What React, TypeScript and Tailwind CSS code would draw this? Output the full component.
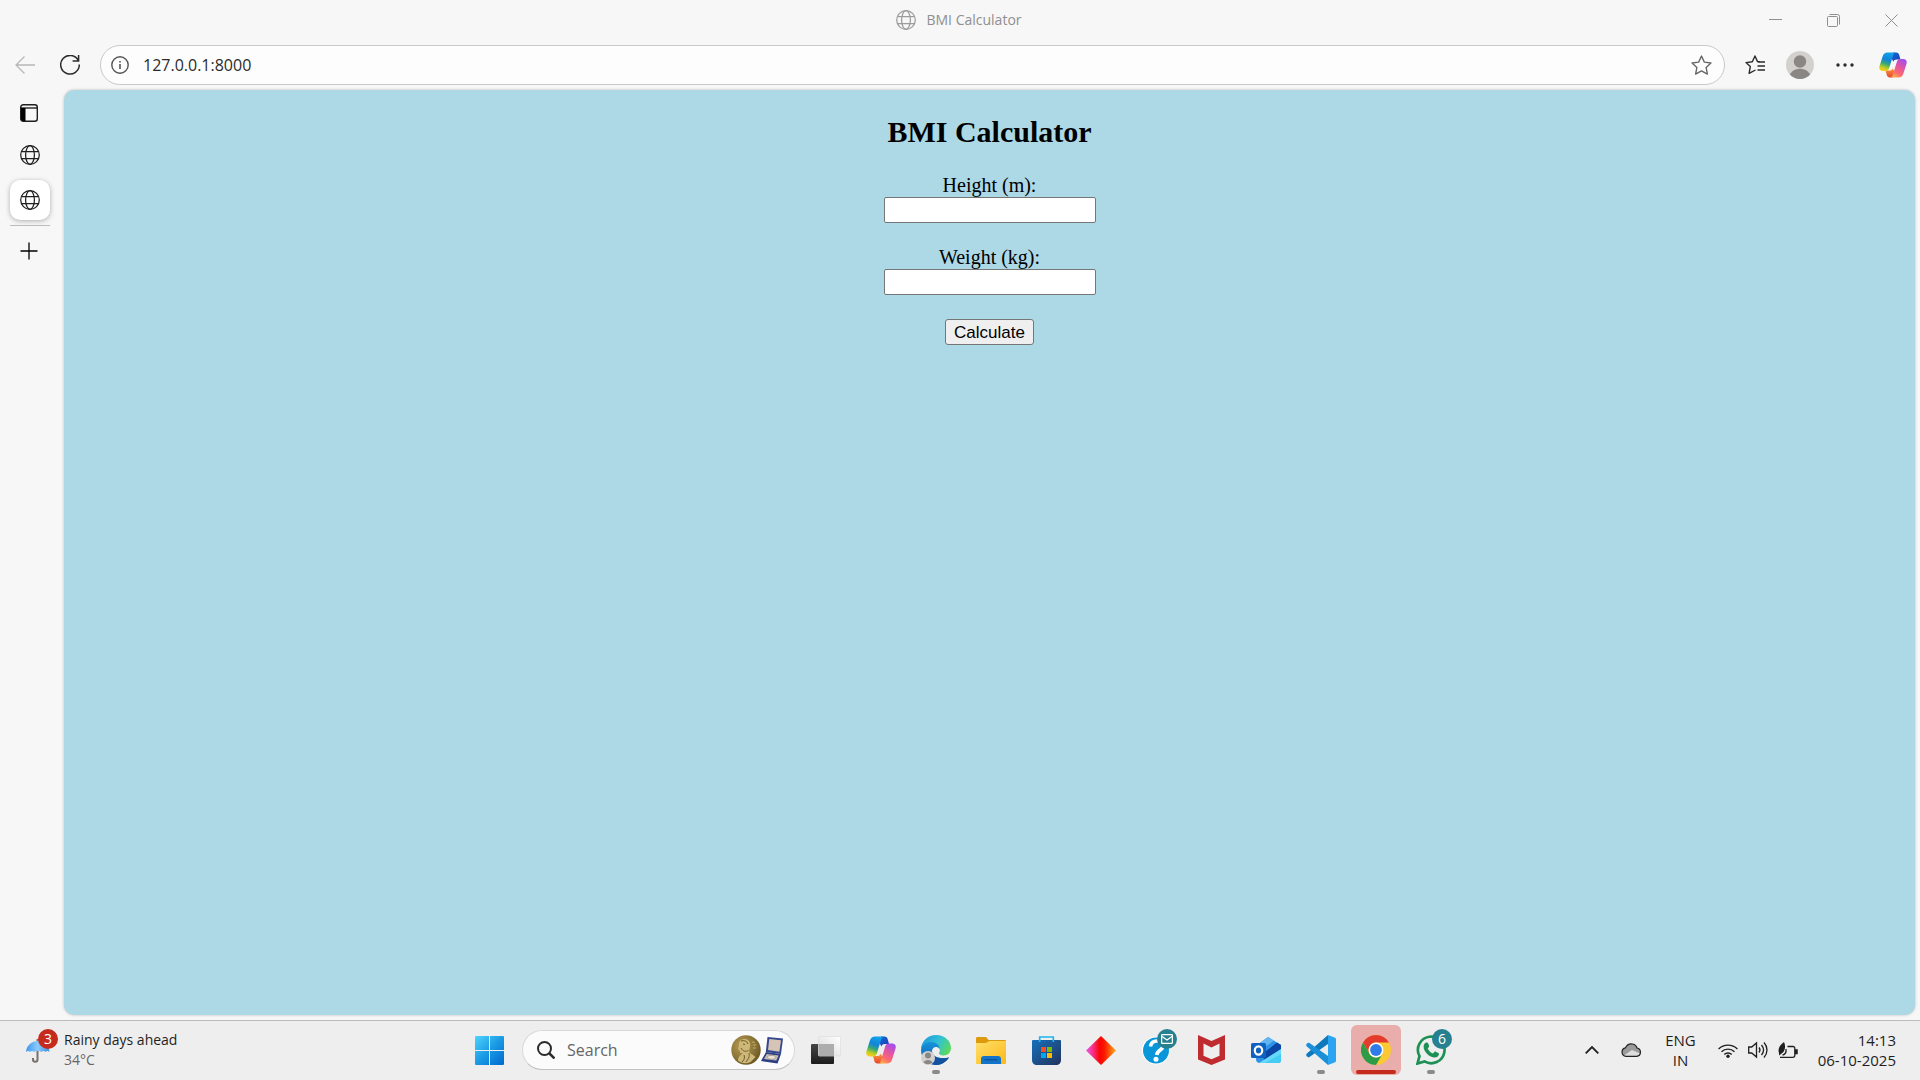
import type { ReactNode } from "react";

const ui = "font-['Open_Sans','Noto_Sans',sans-serif]";

function Globe({ className }: { className: string }) {
  return (
    <svg viewBox="0 0 20 20" className={className} fill="none" stroke="currentColor" strokeWidth="1.25">
      <circle cx="10" cy="10" r="9.3" />
      <ellipse cx="10" cy="10" rx="4.4" ry="9.3" />
      <path d="M1.4 6.7h17.2M1.4 13.5h17.2" />
    </svg>
  );
}

function Copilot({ id, className }: { id: string; className: string }) {
  const blue = `${id}-blue`;
  const pink = `${id}-pink`;
  const dark = `${id}-dark`;
  const flame = `${id}-flame`;
  return (
    <svg viewBox="0 0 30 28" className={className}>
      <defs>
        <linearGradient id={blue} x1="0.6" y1="0" x2="0.3" y2="1">
          <stop offset="0" stopColor="#0fa3ea" />
          <stop offset="0.4" stopColor="#1583d8" />
          <stop offset="0.62" stopColor="#35a977" />
          <stop offset="0.85" stopColor="#c5cf1e" />
          <stop offset="1" stopColor="#fccb1c" />
        </linearGradient>
        <linearGradient id={pink} x1="0.8" y1="0" x2="0.3" y2="1">
          <stop offset="0" stopColor="#a04df4" />
          <stop offset="0.45" stopColor="#e6559f" />
          <stop offset="0.75" stopColor="#fb6a70" />
          <stop offset="1" stopColor="#fda94b" />
        </linearGradient>
        <linearGradient id={dark} x1="0" y1="0" x2="1" y2="1">
          <stop offset="0" stopColor="#1169d6" />
          <stop offset="1" stopColor="#1c3fb8" />
        </linearGradient>
        <linearGradient id={flame} x1="0" y1="0" x2="0" y2="1">
          <stop offset="0" stopColor="#fd9a3c" />
          <stop offset="1" stopColor="#e5452f" />
        </linearGradient>
      </defs>
      <path d="M15 .5h3.500c1.800 0 2.700 1 3.200 2.700L23 8h-4c-2 0-3 .8-3.600 2.600L13 6z" fill={`url(#${dark})`} />
      <path d="M15 27.500h-3.500c-1.800 0-2.700-1-3.200-2.700L7 20h4c2 0 3-.8 3.600-2.600L17 22z" fill={`url(#${flame})`} />
      <path d="M9 .5h9c-1.700 0-2.400 1.500-3 3.500l-4 13c-.6 2-1.500 3.500-4 3.500H4c-3.200 0-4.400-2.400-3.500-5.300L4 4.300C4.800 1.800 6.500.5 9 .5z" fill={`url(#${blue})`} />
      <path d="M21 27.500h-9c1.700 0 2.400-1.500 3-3.500l4-13c.6-2 1.500-3.500 4-3.500h3c3.200 0 4.400 2.400 3.500 5.300L26 23.700c-.8 2.500-2.500 3.800-5 3.800z" fill={`url(#${pink})`} />
    </svg>
  );
}

function WindowsLogo() {
  return (
    <svg viewBox="0 0 29 29" className="size-[29px]">
      <defs>
        <linearGradient id="win" x1="0" y1="0" x2="29" y2="29" gradientUnits="userSpaceOnUse">
          <stop offset="0" stopColor="#4fd5fd" />
          <stop offset="0.5" stopColor="#1a9ae4" />
          <stop offset="1" stopColor="#0068cf" />
        </linearGradient>
      </defs>
      <path fill="url(#win)" d="M1 0h13v14H0V1a1 1 0 0 1 1-1zM15 0h13a1 1 0 0 1 1 1v13H15zM0 15h14v14H1a1 1 0 0 1-1-1zM15 15h14v13a1 1 0 0 1-1 1H15z" />
    </svg>
  );
}

function Medal() {
  return (
    <svg viewBox="0 0 30 30" className="size-[30px]">
      <defs>
        <radialGradient id="gold" cx="0.35" cy="0.35" r="0.75">
          <stop offset="0" stopColor="#b59a50" />
          <stop offset="0.6" stopColor="#8b7438" />
          <stop offset="1" stopColor="#64521f" />
        </radialGradient>
      </defs>
      <circle cx="15" cy="15" r="14.700" fill="url(#gold)" />
      <path d="M10 5c4-2.500 9 0 9.200 4.500.2 3-1.200 4.500-1 7 .4 2.500 4.300 3 6.300 5.500l-5 5c-4 2-9 1.500-12.500-1.500 0-4 3-5.500 4.800-7.500-2.300.3-3.300-.5-3-2.500L7 14l1-3c-.4-2 .2-4.500 2-6z" fill="#cdb87a" />
      <path d="M10 13c2 3.500 4.500 4 7.500 2.500M13 20c1 3 .5 4.500-2 7M18 18c1 4-1 6-3 9M10 6c3-1 6 0 7 3M12 9l2 .5" stroke="#715c29" strokeWidth="1" fill="none" />
      <path d="M21 7l3 .5M22 10h3.500M22 13h3" stroke="#cdb87a" strokeWidth=".8" />
    </svg>
  );
}

function MedalBox() {
  return (
    <svg viewBox="0 0 22 27" className="h-[27px] w-[22px]">
      <path d="M6.500 0L22 1.500 20 17 4.800 15z" fill="#34488c" />
      <path d="M8.300 2L20 3.200 18.400 14.700 7 13z" fill="#d6c5b6" />
      <path d="M5 15l15 2-3.500 9.500L0 24z" fill="#2b3f86" />
      <path d="M5.800 17l11.800 1.600-2.300 5L3 22z" fill="#cbbcb0" />
      <ellipse cx="10.500" cy="20.300" rx="4.200" ry="1.900" fill="#ece5dc" stroke="#8a7f76" strokeWidth=".6" />
    </svg>
  );
}

function TaskView() {
  return (
    <svg viewBox="0 0 30 28" className="h-7 w-[30px]">
      <defs>
        <linearGradient id="tvd" x1="0" y1="0" x2="0" y2="1">
          <stop offset="0" stopColor="#454545" /><stop offset="1" stopColor="#1c1c1c" />
        </linearGradient>
        <linearGradient id="tvl" x1="1" y1="0" x2="0" y2="1">
          <stop offset="0" stopColor="#fff" /><stop offset="1" stopColor="#d8d8d8" />
        </linearGradient>
      </defs>
      <rect x="0" y="8" width="23" height="20" rx="1" fill="url(#tvd)" />
      <rect x="7.500" y=".5" width="22" height="19.500" rx="1" fill="url(#tvl)" stroke="#dedede" strokeWidth=".7" />
      <rect x="8" y="8" width="15" height="12" fill="#adadad" />
    </svg>
  );
}

function Edge() {
  return (
    <svg viewBox="0 0 30 30" className="size-[30px]">
      <defs>
        <linearGradient id="edge-top" x1="0" y1="0.3" x2="1" y2="0.7">
          <stop offset="0" stopColor="#1e9ad8" /><stop offset="0.5" stopColor="#31c1d6" /><stop offset="1" stopColor="#5fdb55" />
        </linearGradient>
        <linearGradient id="edge-mid" x1="0" y1="0" x2="0" y2="1">
          <stop offset="0" stopColor="#1894dd" /><stop offset="1" stopColor="#0b57a8" />
        </linearGradient>
      </defs>
      <path d="M0 14C.5 6 7 0 15 0c9 0 15 6 15 13 0 4.500-3.200 7.500-7.500 7.500-3.500 0-5-1.500-4.500-2.700 1-1.500 1-3 .3-4.300C15 8 5 8 0 14z" fill="url(#edge-top)" />
      <path d="M0 15c1-6 6-8.500 11-8 4.500.4 7.600 3.500 7.500 7-1-1.500-2.200-2-3.500-2-2.300 0-4 1.800-4 4.200 0 5.300 7 8 17 6.300C24.500 27.500 19.500 30 15 30 7 30 0 24 0 15z" fill="url(#edge-mid)" />
      <path d="M11 17c1 5.500 8 8 17 5.500C24.500 28 19 30.500 13.500 29.900 10 27 9.500 21 11 17z" fill="#1252a0" />
      <circle cx="7" cy="23" r="7" fill="#d3d1ce" />
      <circle cx="7" cy="20.500" r="3" fill="#8a8683" />
      <path d="M2.500 27.500c1-3.500 8-3.500 9 0a6.500 6.500 0 0 1-9 0z" fill="#8a8683" />
    </svg>
  );
}

function Explorer() {
  return (
    <svg viewBox="0 0 30 27" className="h-[27px] w-[30px]">
      <defs>
        <linearGradient id="folder" x1="0" y1="0" x2="1" y2="1">
          <stop offset="0" stopColor="#ffdf6c" /><stop offset="1" stopColor="#fbb917" />
        </linearGradient>
      </defs>
      <path d="M0 1.500C0 .6.600 0 1.500 0H9c1 0 1.500.4 2 1l1.500 2H29a1 1 0 0 1 1 1v8H0z" fill="#dc9a0c" />
      <path d="M0 6h9c1.500 0 2-.5 3-1.200L13.500 4H30v22a1 1 0 0 1-1 1H1a1 1 0 0 1-1-1z" fill="url(#folder)" />
      <path d="M5 27v-5c0-2 1-3 3-3h14c2 0 3 1 3 3v5z" fill="#1274c8" />
      <path d="M8.500 22.800h13" stroke="#0b4f94" strokeWidth="1.200" />
    </svg>
  );
}

function Store() {
  return (
    <svg viewBox="0 0 29 29" className="size-[29px]">
      <defs>
        <linearGradient id="bag" x1="0" y1="0" x2="1" y2="1">
          <stop offset="0" stopColor="#1570bc" /><stop offset="1" stopColor="#23335c" />
        </linearGradient>
      </defs>
      <path d="M0 5a1 1 0 0 1 1-1h27a1 1 0 0 1 1 1v19c0 3-2 5-5 5H5c-3 0-5-2-5-5z" fill="url(#bag)" />
      <path d="M7.700 6V1h13.600v5" fill="none" stroke="#1fb5ee" strokeWidth="1.700" />
      <path d="M9 11h5v5H9z" fill="#f25022" />
      <path d="M15 11h5v5h-5z" fill="#7fba00" />
      <path d="M9 17h5v5H9z" fill="#00a4ef" />
      <path d="M15 17h5v5h-5z" fill="#ffb900" />
    </svg>
  );
}

function Diamond() {
  return (
    <svg viewBox="0 0 30 29" className="h-[29px] w-[30px]">
      <defs>
        <linearGradient id="dia" x1="0" y1="0" x2="1" y2="0">
          <stop offset="0" stopColor="#ee55e6" /><stop offset="0.2" stopColor="#f53596" /><stop offset="0.45" stopColor="#fb0505" /><stop offset="0.6" stopColor="#fb1500" /><stop offset="0.8" stopColor="#f95f0c" /><stop offset="1" stopColor="#f9b01c" />
        </linearGradient>
      </defs>
      <path d="M15 0l15 14.500L15 29 0 14.500z" fill="url(#dia)" />
    </svg>
  );
}

function Help() {
  return (
    <svg viewBox="0 0 30 30" className="size-[30px]">
      <circle cx="15" cy="15.500" r="14" fill="#fff" />
      <circle cx="15" cy="15.500" r="13" fill="#0a97d9" />
      <path d="M9.500 11.500c.5-4 3-5.500 6.500-5.500 6 0 7.500 5.500 4 8.500-2.500 1.800-4 2.700-4.300 5.500" fill="none" stroke="#fff" strokeWidth="3.600" />
      <circle cx="15" cy="24.300" r="2.500" fill="#fff" />
    </svg>
  );
}

function McAfee() {
  return (
    <svg viewBox="0 0 27 30" className="h-[30px] w-[27px]">
      <path d="M0 0l13.500 6L27 0v24.500L13.500 30 0 24.500zM5.500 8.500v12.300l8 3.500 8-3.500V8.500l-8 4z" fill="#bf2c30" fillRule="evenodd" />
    </svg>
  );
}

function Outlook() {
  return (
    <svg viewBox="0 0 30 27" className="h-[27px] w-[30px]">
      <path d="M6 8L17 0l13 8v15a3 3 0 0 1-3 3H9a4 4 0 0 1-4-4z" fill="#2c93e8" />
      <path d="M6 8L17 0l6 3.500L7 15z" fill="#62b5f0" />
      <path d="M30 8v5L14 23l-4-5L26 5.500z" fill="#0b45a6" />
      <path d="M30 12v11a3 3 0 0 1-3 3H8z" fill="#43cdf4" />
      <path d="M30 12v5L14 26H8z" fill="#8be4fa" opacity=".5" />
      <rect x="0" y="6" width="15" height="15" rx="1.500" fill="#0f62c0" />
      <ellipse cx="7.500" cy="13.500" rx="3.700" ry="4.100" fill="none" stroke="#fff" strokeWidth="2.200" />
    </svg>
  );
}

function VsCode() {
  return (
    <svg viewBox="0 0 30 30" className="size-[30px]">
      <path d="M22 0v9L2.800 22.500.3 21v-2z" fill="#0f79bd" />
      <path d="M22 30v-9L2.800 7.500.3 9v2z" fill="#1b8fd8" />
      <path d="M22 0l6.500 2.500c1 .4 1.500 1 1.500 2v21c0 1-.5 1.600-1.500 2L22 30z" fill="#2ba4f2" />
    </svg>
  );
}

function Chrome() {
  return (
    <svg viewBox="0 0 30 30" className="size-[30px]">
      <circle cx="15" cy="15" r="15" fill="#fbc934" />
      <path d="M15 0a15 15 0 0 1 13 7.500H15a7.500 7.500 0 0 0-6.500 11.200L2 7.500A15 15 0 0 1 15 0z" fill="#e33b2e" />
      <path d="M2 7.500l6.500 11.250a7.500 7.500 0 0 0 6.500 3.750 7.500 7.500 0 0 0 6.500-3.750L15 30A15 15 0 0 1 2 7.500z" fill="#2c9c48" />
      <circle cx="15" cy="15" r="7.400" fill="#fff" />
      <circle cx="15" cy="15" r="5.900" fill="#2f7bea" />
    </svg>
  );
}

function WhatsApp() {
  return (
    <svg viewBox="0 0 30 30" className="size-[30px]">
      <path d="M1.500 28.500l2-7.300a13.300 13.300 0 1 1 5 5.200z" fill="none" stroke="#1d9155" strokeWidth="2.700" />
      <path d="M10.300 7.500c.8-.3 1.500 0 1.800.8l1 2.400c.2.600 0 1-.4 1.500l-1 1.200c1 2.300 2.700 4 5.300 5.100l1.300-1.500c.4-.5.800-.6 1.400-.3l2.600 1.200c.7.400.8.800.6 1.600-.5 2-2 3-4.300 3-5 0-11-5.800-11-10.800 0-2.300 1-3.600 2.700-4.200z" fill="#1d9155" />
    </svg>
  );
}

function AppButton({ label, running, active, badge, children }: {
  label: string; running?: boolean; active?: boolean; badge?: ReactNode; children: ReactNode;
}) {
  return (
    <button
      aria-label={label}
      className={`relative flex size-[50px] items-center justify-center rounded-md ${active ? "bg-[#e9aeab]" : ""}`}
    >
      {children}
      {badge && (
        <span className="absolute top-1 right-1 flex size-5 items-center justify-center rounded-full bg-[#26808f] text-sm text-white">
          {badge}
        </span>
      )}
      {running && <span className="absolute bottom-px left-[21px] h-1 w-2 rounded-full bg-[#8a8a8a]" />}
      {active && <span className="absolute bottom-px left-[5px] h-1 w-10 rounded-full bg-[#c42b1c]" />}
    </button>
  );
}

function WindowTitle() {
  return (
    <header className="grid h-10 grid-cols-[1fr_auto_1fr] text-[#8f8f8f]">
      <span />
      <div className="flex items-center gap-2.5 pr-0.5 text-sm">
        <Globe className="size-5 text-[#9c9c9c]" />
        <span>BMI Calculator</span>
      </div>
      <div className="flex items-center justify-end">
        <button aria-label="Minimize" className="flex h-full w-[58px] items-center justify-center">
          <svg viewBox="0 0 13 13" className="size-[13px]" stroke="currentColor"><path d="M0 5.500h13" /></svg>
        </button>
        <button aria-label="Restore" className="flex h-full w-[58px] items-center justify-center">
          <svg viewBox="0 0 13 13" className="size-[13px]" fill="none" stroke="currentColor">
            <rect x=".5" y="2.500" width="10" height="10" rx="1" /><path d="M2.500.5h8a2 2 0 0 1 2 2v8" />
          </svg>
        </button>
        <button aria-label="Close" className="flex h-full w-[58px] items-center justify-center">
          <svg viewBox="0 0 13 13" className="size-[13px]" stroke="currentColor"><path d="M.5.5l12 12M12.500.5l-12 12" /></svg>
        </button>
      </div>
    </header>
  );
}

function Toolbar() {
  return (
    <nav className="flex h-[50px] items-center text-[#2b2b2b]">
      <button aria-label="Back" className="ml-[15px] text-[#b8b8b8]">
        <svg viewBox="0 0 20 18" className="h-[18px] w-5" fill="none" stroke="currentColor" strokeWidth="1.300">
          <path d="M20 9H1M9.500.5L1 9l8.500 8.500" />
        </svg>
      </button>
      <button aria-label="Refresh" className="mr-5 ml-[25px]">
        <svg viewBox="0 0 20 20" className="size-5" fill="none" stroke="currentColor" strokeWidth="1.500">
          <path d="M18.300 5.500A9.300 9.300 0 1 0 19.300 9.500M18.600 0v6h-6" />
        </svg>
      </button>
      <div className="flex h-10 flex-1 items-center rounded-full border border-[#c9c9c9] bg-[#fdfdfd] pr-3 pl-2.5">
        <svg viewBox="0 0 18 18" className="size-[18px] text-[#555]" fill="none" stroke="currentColor" strokeWidth="1.400">
          <circle cx="9" cy="9" r="8.200" /><path d="M9 8v5M9 5v1.500" strokeWidth="1.600" />
        </svg>
        <input
          aria-label="Address"
          defaultValue="127.0.0.1:8000"
          className="ml-3.5 min-w-0 flex-1 bg-transparent text-base text-[#2b2b2b] outline-none"
        />
        <button aria-label="Add to favorites" className="text-[#666]">
          <svg viewBox="0 0 20 20" className="size-[21px]" fill="none" stroke="currentColor" strokeWidth="1.300" strokeLinejoin="round">
            <path d="M10 1l2.700 5.800 6.300.8-4.600 4.300 1.200 6.300L10 15.100l-5.600 3.100 1.200-6.300L1 7.600l6.300-.8z" />
          </svg>
        </button>
      </div>
      <button aria-label="Favorites" className="ml-5">
        <svg viewBox="0 0 20 20" className="size-5" fill="none" stroke="currentColor" strokeWidth="1.400" strokeLinejoin="round">
          <path d="M14.800 6.700L12.400 6.400 10 1 7.300 6.800 1 7.600l4.300 4-1.200 6.800L10.500 15M12.500 7H20M12.500 11H20M12.500 15H20" />
        </svg>
      </button>
      <button aria-label="Profile" className="ml-[21px]">
        <svg viewBox="0 0 28 28" className="size-7">
          <circle cx="14" cy="14" r="14" fill="#d3d1ce" />
          <circle cx="14" cy="10.500" r="6.200" fill="#8a8683" />
          <path d="M4 23.800c3-8 17-8 20 0a14 14 0 0 1-20 0z" fill="#8a8683" />
        </svg>
      </button>
      <button aria-label="Settings and more" className="ml-[22px]">
        <svg viewBox="0 0 18 4" className="h-1 w-[18px]" fill="currentColor">
          <circle cx="2" cy="2" r="1.700" /><circle cx="9" cy="2" r="1.700" /><circle cx="16" cy="2" r="1.700" />
        </svg>
      </button>
      <button aria-label="Copilot" className="mr-[13px] ml-[25px]"><Copilot id="bar" className="h-[26px] w-7" /></button>
    </nav>
  );
}

function TabRail() {
  return (
    <aside className="flex w-16 shrink-0 flex-col items-center pr-1 text-[#1f1f1f]">
      <button aria-label="Tab actions menu" className="mt-3.5 mr-0.5">
        <svg viewBox="0 0 18 18" className="size-[18px]">
          <rect x=".7" y=".7" width="16.600" height="16.600" rx="2.500" fill="none" stroke="currentColor" strokeWidth="1.400" />
          <path d="M1 4h16" stroke="#000" strokeWidth="1.200" /><path d="M1 4h4.500v13H2.500L1 15.500z" fill="#000" />
        </svg>
      </button>
      <button aria-label="Tab" className="mt-[23px]"><Globe className="size-5" /></button>
      <button aria-label="BMI Calculator tab" className="mt-[15px] flex size-10 items-center justify-center rounded-[10px] bg-white shadow-[0_1px_5px_rgba(0,0,0,0.3)]">
        <Globe className="size-5" />
      </button>
      <hr className="mt-[5px] w-10 border-[#bcbcbc]" />
      <button aria-label="New tab" className="mt-4 mr-0.5">
        <svg viewBox="0 0 18 18" className="size-[18px]" stroke="#000" strokeWidth="1.300"><path d="M9 .5v17M.5 9h17" /></svg>
      </button>
    </aside>
  );
}

function BmiPage() {
  const field = "h-[26px] w-[212px] rounded-[2px] border border-[#767676] bg-white px-1";
  return (
    <main className="flex-1 rounded-[10px] bg-[#add8e6] pt-[25px] text-center font-['Liberation_Serif',serif] text-xl leading-[23px] text-black shadow-[0_0_3px_rgba(0,0,0,0.25)]">
      <h2 className="mb-[25px] text-3xl leading-[34px] font-bold">BMI Calculator</h2>
      <form className="flex flex-col items-center" onSubmit={(e) => e.preventDefault()}>
        <label htmlFor="height">Height (m):</label>
        <input id="height" className={field} />
        <label htmlFor="weight" className="mt-[23px]">Weight (kg):</label>
        <input id="weight" className={field} />
        <button className="mt-6 h-[26px] rounded-[3px] border border-[#767676] bg-[#efefef] px-2 font-['Liberation_Sans',sans-serif] text-[17px] leading-none">
          Calculate
        </button>
      </form>
    </main>
  );
}

function Taskbar() {
  return (
    <footer className="grid h-[60px] grid-cols-[1fr_auto_1fr] items-center border-t border-[#bcbcbc] bg-[#eeeeee] pb-px text-sm leading-5 text-[#1f1f1f]">
      <button className="flex items-center pl-[25px] text-left">
        <span className="relative mr-3 block">
          <svg viewBox="0 0 27 27" className="size-[27px]">
            <defs>
              <linearGradient id="umb" x1="0" y1="0" x2="1" y2="0">
                <stop offset="0" stopColor="#3f98ee" /><stop offset="0.5" stopColor="#8ccbfb" /><stop offset="1" stopColor="#3a8ce6" />
              </linearGradient>
            </defs>
            <path d="M12.500 2v20.500c0 3-4.500 3-4.500 0V21" fill="none" stroke="#77706c" strokeWidth="2" />
            <path d="M1 15C1.500 8 7 4 12.500 4S24 8 24.500 15c-1.500-1.500-2.800-1.500-4 0-1.300-1.500-2.800-1.500-4 0-1.300-1.500-6-1.500-7.500 0-1.300-1.500-2.700-1.500-4 0-1-1.500-2.500-1.500-4 0z" fill="url(#umb)" />
          </svg>
          <span className="absolute -top-2 -right-1.5 flex size-5 items-center justify-center rounded-full bg-[#c42b1c] text-white">3</span>
        </span>
        <span>
          <span className="block">Rainy days ahead</span>
          <span className="block text-[#666]">34°C</span>
        </span>
      </button>
      <div className="flex items-center gap-[5px]">
        <AppButton label="Start"><WindowsLogo /></AppButton>
        <div className="mr-px ml-[3px] flex h-10 w-[273px] items-center rounded-full border border-[#d9d9d9] border-b-[#c2c2c2] bg-[#fbfbfb] pr-[11px] pl-3.5">
          <svg viewBox="0 0 18 18" className="size-[18px]" fill="none" stroke="#2b2b2b" strokeWidth="2">
            <circle cx="7.500" cy="7.500" r="6.500" /><path d="M12 12l5.500 5.500" strokeWidth="2.500" />
          </svg>
          <input aria-label="Search" placeholder="Search" className="ml-3 min-w-0 flex-1 bg-transparent text-base outline-none placeholder:text-[#666]" />
          <Medal />
          <MedalBox />
        </div>
        <AppButton label="Task view"><TaskView /></AppButton>
        <AppButton label="Copilot"><Copilot id="task" className="h-7 w-[30px]" /></AppButton>
        <AppButton label="Edge" running><Edge /></AppButton>
        <AppButton label="File Explorer"><Explorer /></AppButton>
        <AppButton label="Microsoft Store"><Store /></AppButton>
        <AppButton label="Diamond"><Diamond /></AppButton>
        <AppButton
          label="Help"
          badge={
            <svg viewBox="0 0 12 10" className="h-2.5 w-3" fill="none" stroke="#fff" strokeWidth="1.300">
              <rect x=".6" y=".6" width="10.800" height="8.800" rx="1" /><path d="M1 2.500l5 3.500 5-3.500" />
            </svg>
          }
        >
          <Help />
        </AppButton>
        <AppButton label="McAfee"><McAfee /></AppButton>
        <AppButton label="Outlook"><Outlook /></AppButton>
        <AppButton label="Visual Studio Code" running><VsCode /></AppButton>
        <AppButton label="Chrome" active><Chrome /></AppButton>
        <AppButton label="WhatsApp" running badge="6"><WhatsApp /></AppButton>
      </div>
      <div className="flex items-center justify-end pr-6 text-[15px]">
        <button aria-label="Show hidden icons">
          <svg viewBox="0 0 14 8" className="h-2 w-3.5" fill="none" stroke="currentColor" strokeWidth="1.800"><path d="M.7 7.300L7 1l6.300 6.300" /></svg>
        </button>
        <button aria-label="OneDrive" className="ml-[22px]">
          <svg viewBox="0 0 20 14" className="h-3.5 w-5">
            <path d="M5 13.300a4.300 4.300 0 0 1-.5-8.500C6 1.500 9 .6 11.500 1c2.500.4 4 2 4.500 4a4.200 4.200 0 0 1-.3 8.300z" fill="#9b9b9b" />
            <path d="M3 12.500L11 7l8 3.500c-.5 2-2 2.800-3.500 2.800H5z" fill="#ddd" />
            <path d="M5 13.300a4.300 4.300 0 0 1-.5-8.500C6 1.500 9 .6 11.500 1c2.500.4 4 2 4.500 4a4.200 4.200 0 0 1-.3 8.300z" fill="none" stroke="#222" strokeWidth="1.200" />
          </svg>
        </button>
        <button className="ml-6 text-center"><span className="block">ENG</span><span className="block">IN</span></button>
        <button aria-label="Network, volume and battery" className="ml-[22px] flex items-center gap-2.5">
          <svg viewBox="0 0 20 15" className="h-[15px] w-5" fill="none" stroke="currentColor" strokeWidth="1.400">
            <path d="M.6 6a13.300 13.300 0 0 1 18.800 0M3.500 8.800a9.200 9.200 0 0 1 13 0M6.300 11.500a5.200 5.200 0 0 1 7.400 0" />
            <circle cx="10" cy="13.200" r="1.700" fill="currentColor" stroke="none" />
          </svg>
          <svg viewBox="0 0 20 18" className="h-[18px] w-5" fill="none" stroke="currentColor" strokeWidth="1.300">
            <path d="M.7 6v6h3L8.500 16V2L3.700 6zM11 6.500c1.200 1.500 1.200 3.500 0 5M13.500 4c2.500 3 2.500 7 0 10M16 1.500c4 4.500 4 10.500 0 15" />
          </svg>
          <svg viewBox="0 0 20 16" className="h-4 w-5" fill="none" stroke="currentColor" strokeWidth="1.300">
            <path d="M9.500 4.500H15a1.800 1.800 0 0 1 1.800 1.800v7.200a1.800 1.800 0 0 1-1.800 1.800H2M8 7c.4 3-1 5.500-3.500 6" />
            <path d="M17.500 8h1.600v3.500h-1.600z" fill="currentColor" />
            <path d="M6 0c1.500 3 1.500 7-.5 10L3 12l-2 1.500V11C-.5 7 1.500 3.500 6 0z" fill="currentColor" stroke="none" />
          </svg>
        </button>
        <button className="ml-5 text-right"><span className="block">14:13</span><span className="block">06-10-2025</span></button>
      </div>
    </footer>
  );
}

export default function App() {
  return (
    <div className={`flex h-screen flex-col bg-[#f7f7f7] ${ui}`}>
      <WindowTitle />
      <Toolbar />
      <div className="flex min-h-0 flex-1 pr-[5px] pb-[5px]">
        <TabRail />
        <BmiPage />
      </div>
      <Taskbar />
    </div>
  );
}
